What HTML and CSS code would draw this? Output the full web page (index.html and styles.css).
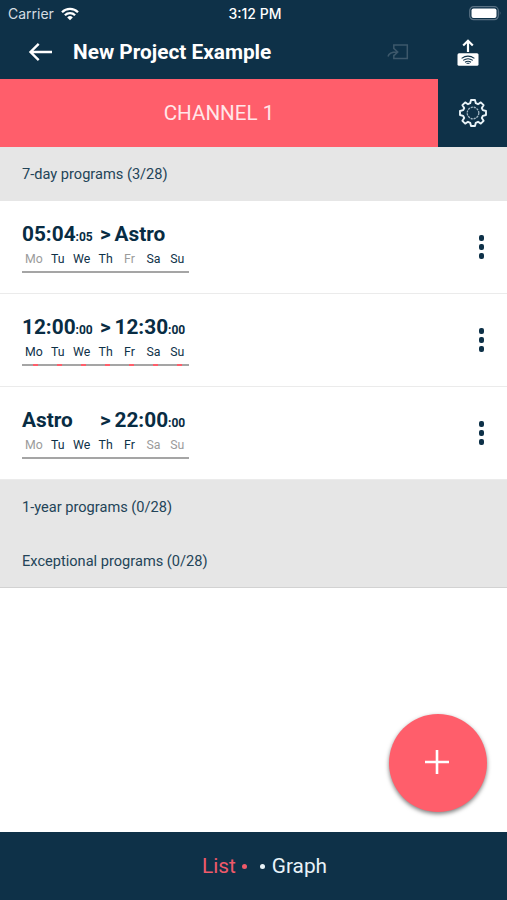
FILE: index.html
```html
<!DOCTYPE html>
<html lang="en">

<head>
    <meta charset="UTF-8">
    <title>New Project Example</title>
    <link rel="stylesheet" href="styles.css">
</head>

<body>
    <div class="status">
        <div class="carrier">
            <span>Carrier</span>
            <svg width="18" height="14" viewBox="0 0 18 14" fill="none" stroke="#fff" stroke-width="2.3">
                <path d="M1 5.2a11.4 11.4 0 0 1 16 0M3.9 8.2a7.2 7.2 0 0 1 10.2 0" />
                <path d="M6.2 10.4a4 4 0 0 1 5.6 0L9 13.2z" fill="#fff" stroke="none" />
            </svg>
        </div>
        <div class="clock">3:12 PM</div>
        <svg class="battery" width="33" height="15" viewBox="0 0 33 15">
            <rect x=".7" y=".7" width="28.6" height="13" rx="4" fill="none" stroke="#5a7284" stroke-width="1.2" />
            <rect x="2.5" y="2.5" width="25" height="9.4" rx="2" fill="#fff" />
            <path d="M30.8 5q1.6 2.2 0 4.4z" fill="#5a7284" />
        </svg>
    </div>

    <header class="toolbar">
        <svg class="back" width="24" height="20" viewBox="0 0 24 20" fill="none" stroke="#fff" stroke-width="2.4">
            <path d="M24 10H2.5M10.7 1.8L2.5 10l8.2 8.2" />
        </svg>
        <h1>New Project Example</h1>
        <svg class="import" width="22" height="16" viewBox="0 0 22 16" fill="none" stroke="#3d586b" stroke-width="1.5">
            <path d="M6.8 5V1h13.5v13.6H6.8v-3.8" />
            <path d="M1 12.5C2 8.7 5 7.8 10.7 8M7 4.6L10.7 8 7 11.6" />
        </svg>
        <svg class="upload" width="22" height="28" viewBox="0 0 22 28" fill="none" stroke="#fff">
            <path d="M11 13V2.2M6.2 6.5L11 1.8l4.8 4.7" stroke-width="2.2" />
            <rect x=".5" y="14.2" width="21" height="12.6" rx="1.5" fill="#fff" stroke="none" />
            <path d="M4.6 19.4q6.4-4.6 12.8 0M6.2 21.4q4.8-3.4 9.6 0M8 23.2q3-2 6 0" stroke="#0e3148" stroke-width="1.1" />
            <path d="M9.5 24.3h3" stroke="#0e3148" />
        </svg>
    </header>

    <nav class="tabs">
        <div class="tab">CHANNEL 1</div>
        <div class="settings">
            <svg width="30" height="30" viewBox="-15 -15 30 30" fill="none" stroke="#e9f3f8">
                <path stroke-width="1.9" stroke-linejoin="round" d="M-2-13H2L2.8-9.8 5-8.8 7.8-10.6 10.6-7.8 8.8-5 9.8-2.8 13-2V2L9.8 2.8 8.8 5 10.6 7.8 7.8 10.6 5 8.8 2.8 9.8 2 13H-2L-2.8 9.8-5 8.8-7.8 10.6-10.6 7.8-8.8 5-9.8 2.8-13 2V-2L-9.8-2.8-8.8-5-10.6-7.8-7.8-10.6-5-8.8-2.8-9.8z" />
                <circle r="5.8" stroke="#9fb3c0" stroke-width="1.3" stroke-dasharray="2.2 .84" />
            </svg>
        </div>
    </nav>

    <main>
        <h2>7-day programs (3/28)</h2>
        <div class="program">
            <div class="info">
                <div class="times"><div class="from">05:04<small>:05</small></div><span class="arrow">&gt;</span><div>Astro</div></div>
                <div class="days"><span class="off">Mo</span><span>Tu</span><span>We</span><span>Th</span><span class="off">Fr</span><span>Sa</span><span>Su</span></div>
                <div class="bar"></div>
            </div>
            <div class="more"><i></i><i></i><i></i></div>
        </div>
        <div class="program">
            <div class="info">
                <div class="times"><div class="from">12:00<small>:00</small></div><span class="arrow">&gt;</span><div>12:30<small>:00</small></div></div>
                <div class="days"><span>Mo</span><span>Tu</span><span>We</span><span>Th</span><span>Fr</span><span>Sa</span><span>Su</span></div>
                <div class="bar"><i></i><i></i><i></i><i></i><i></i><i></i><i></i></div>
            </div>
            <div class="more"><i></i><i></i><i></i></div>
        </div>
        <div class="program">
            <div class="info">
                <div class="times"><div class="from">Astro</div><span class="arrow">&gt;</span><div>22:00<small>:00</small></div></div>
                <div class="days"><span class="off">Mo</span><span>Tu</span><span>We</span><span>Th</span><span>Fr</span><span class="off">Sa</span><span class="off">Su</span></div>
                <div class="bar"></div>
            </div>
            <div class="more"><i></i><i></i><i></i></div>
        </div>
        <h2>1-year programs (0/28)</h2>
        <h2 class="last">Exceptional programs (0/28)</h2>
    </main>

    <button class="add" aria-label="Add program">
        <svg width="24" height="24" viewBox="0 0 24 24" stroke="#fff" stroke-width="2.6">
            <path d="M12 0v24M0 12h24" />
        </svg>
    </button>

    <footer>
        <span class="active">List</span>
        <i class="dot active"></i>
        <i class="dot"></i>
        <span>Graph</span>
    </footer>
</body>

</html>
```

FILE: styles.css
```css
* {
    box-sizing: border-box;
}

body {
    margin: 0;
    height: 900px;
    display: flex;
    flex-direction: column;
    font-family: Roboto, "Liberation Sans", sans-serif;
    color: #0e3148;
    background: #fff;
    overflow: hidden;
}

.status {
    display: grid;
    grid-template-columns: 1fr auto 1fr;
    align-items: center;
    height: 27px;
    padding: 0 5px 0 8px;
    color: #fff;
    background: #0e3148;
    font-family: Inter, sans-serif;
    font-size: 13.5px;
}

.carrier {
    display: flex;
    align-items: center;
    gap: 7px;
    font-size: 14px;
    color: #d5dde2;
}

.clock {
    font-size: 14px;
    font-weight: 500;
}

.battery {
    justify-self: end;
}

.toolbar {
    display: flex;
    align-items: center;
    height: 52px;
    padding: 0 28px;
    color: #fff;
    background: #0e3148;
}

.back {
    margin-top: -3px;
}

h1 {
    flex: 1;
    margin: -3px 0 0 21px;
    font-size: 20.8px;
    font-weight: 700;
    line-height: 24px;
    white-space: nowrap;
}

.import {
    margin: -2px 48px 0 0;
}

.tabs {
    display: flex;
    height: 68px;
    background: #0e3148;
}

.tab {
    width: 438px;
    display: flex;
    align-items: center;
    justify-content: center;
    font-size: 20.6px;
    color: #ffe6e8;
    background: #ff5e6b;
}

.settings {
    flex: 1;
    display: flex;
    align-items: center;
    justify-content: center;
}

main {
    flex: 1;
}

h2 {
    height: 54px;
    margin: 0;
    padding-left: 22px;
    font-size: 14.6px;
    font-weight: 400;
    line-height: 54px;
    color: #234458;
    background: #e6e6e6;
}

h2.last {
    border-bottom: 1px solid #d2d2d2;
}

.program {
    display: flex;
    justify-content: space-between;
    align-items: center;
    height: 93px;
    padding: 0 22px;
    border-bottom: 1px solid #ebebeb;
}

.info {
    width: 167px;
}

.times {
    display: flex;
    align-items: baseline;
    font-size: 20.8px;
    font-weight: 700;
    line-height: 24px;
    color: #082c43;
}

.from {
    width: 78px;
}

.arrow {
    width: 14.5px;
}

small {
    font-size: 12px;
}

.days {
    display: grid;
    grid-template-columns: repeat(7, 23.9px);
    margin-top: 2px;
    font-size: 12.3px;
    line-height: 16px;
    text-align: center;
}

.days .off {
    color: #9b9b9b;
}

.bar {
    display: grid;
    grid-template-columns: repeat(7, 24px);
    justify-items: center;
    height: 2px;
    margin-top: 4px;
    background: #a5a5a5;
}

.bar i {
    width: 5px;
    height: 2px;
    margin-left: 3px;
    background: #ff5e6b;
}

.more {
    display: grid;
    gap: 3.5px;
    margin-right: 1px;
}

.more i {
    width: 5.5px;
    height: 5.5px;
    border-radius: 2px;
    background: #0e3148;
}

.add {
    position: absolute;
    left: 389px;
    top: 714px;
    width: 98px;
    height: 98px;
    padding: 0 2px 2px 0;
    display: flex;
    align-items: center;
    justify-content: center;
    border: 0;
    border-radius: 50%;
    background: #ff5e6b;
    box-shadow: 0 2px 4px rgba(0, 0, 0, 0.5);
}

footer {
    display: flex;
    align-items: center;
    justify-content: center;
    height: 68px;
    padding-left: 22px;
    font-size: 20.8px;
    color: #e9f3f8;
    background: #0e3148;
}

.dot {
    width: 5px;
    height: 5px;
    margin: 0 6.5px;
    border-radius: 50%;
    background: #e9f3f8;
}

span.active {
    color: #ef5a6a;
}

.dot.active {
    background: #ef5a6a;
}
```
